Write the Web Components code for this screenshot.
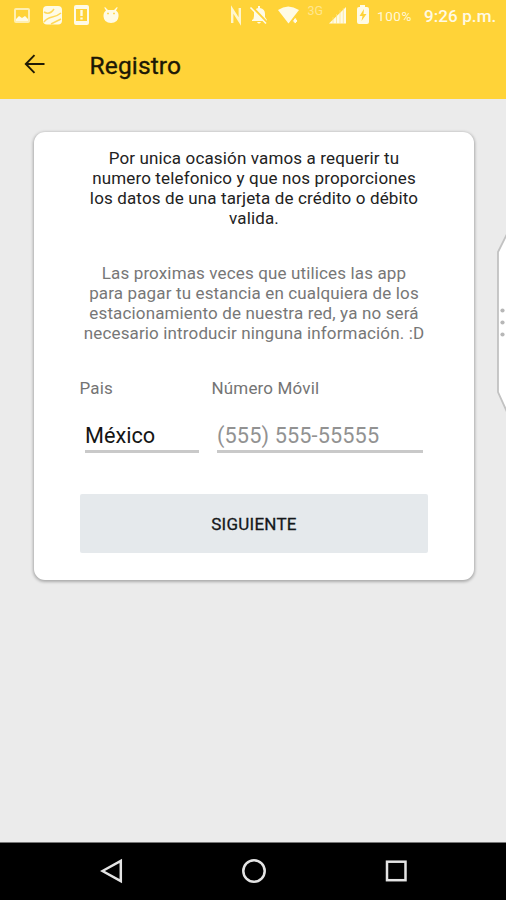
<!DOCTYPE html>
<html lang="es">
<head>
<meta charset="utf-8">
<title>Registro</title>
<style>
html, body { margin: 0; height: 100%; overflow: hidden; }
body { font-family: Roboto, "Noto Sans", sans-serif; }
</style>
</head>
<body>
<registro-screen></registro-screen>
<script>
const define = (name, html) => {
  const t = document.createElement('template');
  t.innerHTML = html;
  customElements.define(name, class extends HTMLElement {
    constructor() {
      super();
      this.attachShadow({ mode: 'open' }).append(t.content.cloneNode(true));
    }
  });
};

define('status-bar', `
<style>
:host { display: grid; grid-template-columns: 229px 143px 1fr; height: 32px; color: #fff6d2; background: #ffd338; align-items: center; white-space: nowrap; }
svg { display: block; fill: #fffbe6; }
.left, .mid { height: 32px; }
.right { display: flex; align-items: center; height: 32px; }
.pct { font-size: 13.500px; margin-left: 5px; width: 47px; color: #fff8d8; letter-spacing: .6px; }
.time { font-size: 17px; font-weight: 500; color: #fffae4; letter-spacing: .1px; }
.net { font: 12.500px Roboto, sans-serif; fill: #ffe68f; }
</style>
<svg class="left" width="229" height="32" viewBox="0 0 229 32">
  <path fill-rule="evenodd" d="M16 8h12a2 2 0 0 1 2 2v11a2 2 0 0 1-2 2H16a2 2 0 0 1-2-2V10a2 2 0 0 1 2-2zm0 2v11h12V10z" opacity=".7"/>
  <path d="M16 21v-2l3-3 3 2 3-2 3 3v2z"/>
  <rect x="43" y="6" width="19" height="18.500" rx="4"/>
  <path d="M44 12c5 3 8 0 10-3M44 22c5-7 10-3 17-9M51 24l10-5" fill="none" stroke="#ffd95a" stroke-width="1.500"/>
  <path fill-rule="evenodd" d="M76 5h11a2 2 0 0 1 2 2v16a2 2 0 0 1-2 2H76a2 2 0 0 1-2-2V7a2 2 0 0 1 2-2zm0 4v12h11V9z"/>
  <path d="M80.300 10h2.400v6h-2.400zM80.300 17.500h2.400v2h-2.400z"/>
  <path d="M105 7l3 3h6l3-3 .7.700L116 10.500q3 2 2.500 6-.5 6.500-7.500 6.500t-7.500-6.500q-.3-4 2.500-6L104.300 7.700z"/>
  <path d="M107 13.500h2M113 13.500h2" stroke="#ffd95a" stroke-width="1.500"/>
</svg>
<svg class="mid" width="143" height="32" viewBox="229 0 143 32">
  <path d="M232.200 23V9.500l7.600 12V8" fill="none" stroke="#fff6cc" stroke-width="2.400"/>
  <path d="M252 20q2-1 2-4v-3q0-4 4-5V6h2v2q5 1 5 6v3l2 3v1h-15zM257 22h4q-2 3-4 0z"/>
  <path d="M252 7l15.500 16" stroke="#ffd338" stroke-width="2.500"/><path d="M250.500 7.500l15.500 16" stroke="#fffbe6" stroke-width="1.600"/>
  <path d="M278 10q10-7 21 0l-10.500 13.500z"/>
  <path d="M292.500 21l2.700-4 2.700 4-2.700 3z" stroke="#ffd338" stroke-width="1"/>
  <text class="net" x="307.500" y="15">3G</text>
  <path d="M329 23.500L346 7v16.500z"/>
  <path d="M333 17v7M336.500 14v10M340 10v14M343.300 8v16" stroke="#ffe27d" stroke-width=".7"/>
  <path d="M360 7V5h5v2h2a2 2 0 0 1 2 2v13a2 2 0 0 1-2 2h-8a2 2 0 0 1-2-2V9a2 2 0 0 1 2-2z"/>
  <path d="M364 9l-4.500 7h3l-1 5 5-7h-3z" fill="#ffd338"/>
</svg>
<div class="right"><span class="pct">100%</span><span class="time">9:26 p.m.</span></div>
`);

define('app-bar', `
<style>
:host { display: flex; align-items: center; height: 67px; box-sizing: border-box; background: #ffd338; color: #1d1805; }
svg { flex: none; margin: -3px 45px 0 24px; }
h1 { margin: 0 0 0 -.5px; font-size: 24.500px; font-weight: 400; line-height: 28px; letter-spacing: .15px; -webkit-text-stroke: .35px currentColor; }
</style>
<svg width="21" height="20" viewBox="0 0 21 20" fill="none" stroke="#211b05" stroke-width="1.900"><path d="M20.500 10H2M10.500 1.200L1.800 10l8.700 8.800"/></svg>
<h1><slot></slot></h1>
`);

define('text-block', `
<style>
:host { display: block; text-align: center; font-size: 17px; line-height: 20px; color: var(--ink, #222); letter-spacing: .14px; margin: 0 -20px; }
::slotted(*) { white-space: pre-line; }
</style>
<slot></slot>
`);

define('form-field', `
<style>
:host { display: block; }
label { display: block; font-size: 17px; line-height: 20px; color: #747474; letter-spacing: .16px; margin-left: -.5px; }
.value { margin: 22px 5px 0; height: 33px; box-sizing: border-box; border-bottom: 3px solid #c9c9c9; font-size: 21.700px; line-height: 28px; padding-top: 2px; letter-spacing: var(--track, 0); color: var(--ink, #151515); white-space: nowrap; }
</style>
<label><slot name="label"></slot></label>
<div class="value"><slot></slot></div>
`);

define('action-button', `
<style>
:host { display: block; }
button { display: block; width: 100%; height: 59px; border: 0; border-radius: 2px; background: #e5e9ec; color: #15181a; font: 400 17px Roboto, sans-serif; letter-spacing: .25px; -webkit-text-stroke: .3px currentColor; padding: 0; }
</style>
<button><slot></slot></button>
`);

define('form-card', `
<style>
:host { display: block; box-sizing: border-box; width: 440px; height: 448px; margin: 33px 0 0 34px; padding: 16px 46px 0; background: #fff; border-radius: 11px; box-shadow: 0 1px 3px 1px rgba(0,0,0,.27); }
.fields { display: grid; grid-template-columns: 124px 216px; column-gap: 8px; margin-top: 35px; }
.second { margin-top: 35px; --ink: #777; }
.first { --ink: #222; }
action-button { margin-top: 41px; }
</style>
<text-block class="first"><span><slot name="intro"></slot></span></text-block>
<text-block class="second"><span><slot name="note"></slot></span></text-block>
<div class="fields"><slot name="fields"></slot></div>
<action-button><slot name="action"></slot></action-button>
`);

define('edge-handle', `
<style>
:host { display: block; position: absolute; right: 0; top: 234px; width: 10px; height: 178px; }
svg { display: block; }
</style>
<svg width="10" height="178" viewBox="0 0 10 178"><path d="M11 0L2 18v140l9 20" fill="#fff" stroke="#c2c2c2" stroke-width="1.800"/><g fill="#b7b7b7"><circle cx="6.500" cy="76.500" r="2.100"/><circle cx="6.500" cy="88.500" r="2.100"/><circle cx="6.500" cy="100.500" r="2.100"/></g></svg>
`);

define('nav-bar', `
<style>
:host { display: flex; justify-content: space-between; align-items: center; box-sizing: border-box; height: 58px; padding: 0 98px 1px 100px; background: #000; border-top: 1px solid #777; }
svg { display: block; fill: none; stroke: #e4e4e4; stroke-width: 2.500; }
</style>
<svg width="24" height="26" viewBox="0 0 24 26"><path d="M2.500 13L20.800 2.800v20.400z"/></svg>
<svg width="26" height="26" viewBox="0 0 26 26"><circle cx="13" cy="13" r="10.700"/></svg>
<svg width="24" height="26" viewBox="0 0 24 26"><rect x="3" y="3.700" width="18.500" height="18.500"/></svg>
`);

define('registro-screen', `
<style>
:host { display: flex; flex-direction: column; position: relative; width: 506px; height: 900px; background: #ebebeb; overflow: hidden; }
main { flex: 1; }
.country { --ink: #151515; }
.phone { --ink: #929292; --track: .12px; }
</style>
<status-bar></status-bar>
<app-bar>Registro</app-bar>
<main>
<form-card>
<span slot="intro">Por unica ocasión vamos a requerir tu
numero telefonico y que nos proporciones
los datos de una tarjeta de crédito o débito
valida.</span>
<span slot="note">Las proximas veces que utilices las app
para pagar tu estancia en cualquiera de los
estacionamiento de nuestra red, ya no será
necesario introducir ninguna información. :D</span>
<form-field slot="fields" class="country"><span slot="label">Pais</span>México</form-field>
<form-field slot="fields" class="phone"><span slot="label">Número Móvil</span>(555) 555-55555</form-field>
<span slot="action">SIGUIENTE</span>
</form-card>
</main>
<edge-handle></edge-handle>
<nav-bar></nav-bar>
`);
</script>
</body>
</html>
